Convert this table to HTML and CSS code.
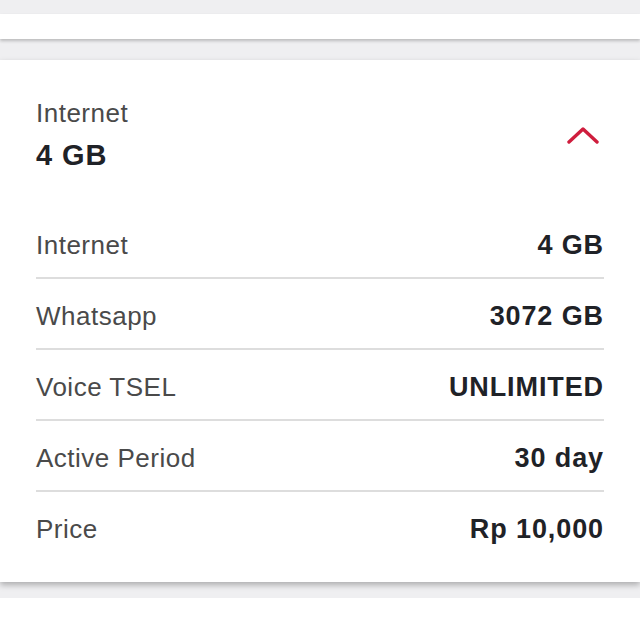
FILE: index.html
```html
<!DOCTYPE html>
<html lang="en">
<head>
<meta charset="utf-8">
<title>Package detail</title>
<link rel="stylesheet" href="styles.css">
</head>
<body>
<div class="page">
  <div class="prev-card"></div>
  <section class="card">
    <header class="card-head">
      <div class="head-text">
        <div class="head-label">Internet</div>
        <div class="head-value">4 GB</div>
      </div>
      <svg class="chevron" width="32" height="18" viewBox="0 0 32 18" aria-hidden="true">
        <path d="M2 16 L16 3 L30 16" fill="none" stroke="#cf1d3d" stroke-width="3.4" stroke-linecap="round" stroke-linejoin="round"/>
      </svg>
    </header>
    <div class="rows">
      <div class="row"><span class="label">Internet</span><span class="value">4 GB</span></div>
      <div class="row"><span class="label">Whatsapp</span><span class="value">3072 GB</span></div>
      <div class="row"><span class="label">Voice TSEL</span><span class="value">UNLIMITED</span></div>
      <div class="row"><span class="label">Active Period</span><span class="value">30 day</span></div>
      <div class="row last"><span class="label">Price</span><span class="value">Rp 10,000</span></div>
    </div>
  </section>
  <div class="tail"></div>
</div>
</body>
</html>
```

FILE: styles.css
```css
html, body {
  margin: 0;
  padding: 0;
}
body {
  font-family: "Liberation Sans", Arial, Helvetica, sans-serif;
  background: #ffffff;
}
.page {
  min-height: 640px;
  display: flex;
  flex-direction: column;
  background: #efeff1;
  overflow: hidden;
}
.prev-card {
  margin-top: 14px;
  height: 25px;
  background: #ffffff;
  box-shadow: 0 2px 3px rgba(0, 0, 0, 0.22);
}
.card {
  margin-top: 21px;
  background: #ffffff;
  padding: 0 36px 20px;
  box-shadow: 0 3px 6px rgba(0, 0, 0, 0.28);
}
.card-head {
  display: flex;
  align-items: center;
  justify-content: space-between;
  padding: 38px 0 36px;
}
.head-text {
  display: flex;
  flex-direction: column;
  gap: 10px;
}
.head-label {
  font-size: 26px;
  line-height: 30px;
  letter-spacing: 0.5px;
  color: #4a4a4a;
}
.head-value {
  font-size: 29px;
  line-height: 34px;
  font-weight: 700;
  letter-spacing: 0.9px;
  color: #1f2227;
}
.chevron {
  margin-right: 5px;
  display: block;
}
.row {
  display: flex;
  justify-content: space-between;
  align-items: center;
  padding: 22px 0 17px;
  line-height: 30px;
  border-bottom: 2px solid #dddddd;
}
.row.last {
  border-bottom: none;
  padding-bottom: 18px;
}
.label {
  font-size: 26px;
  letter-spacing: 0.5px;
  color: #4a4a4a;
}
.value {
  font-size: 27px;
  font-weight: 700;
  letter-spacing: 0.9px;
  color: #1f2227;
}
.tail {
  margin-top: 16px;
  flex: 1;
  background: #ffffff;
}
```
